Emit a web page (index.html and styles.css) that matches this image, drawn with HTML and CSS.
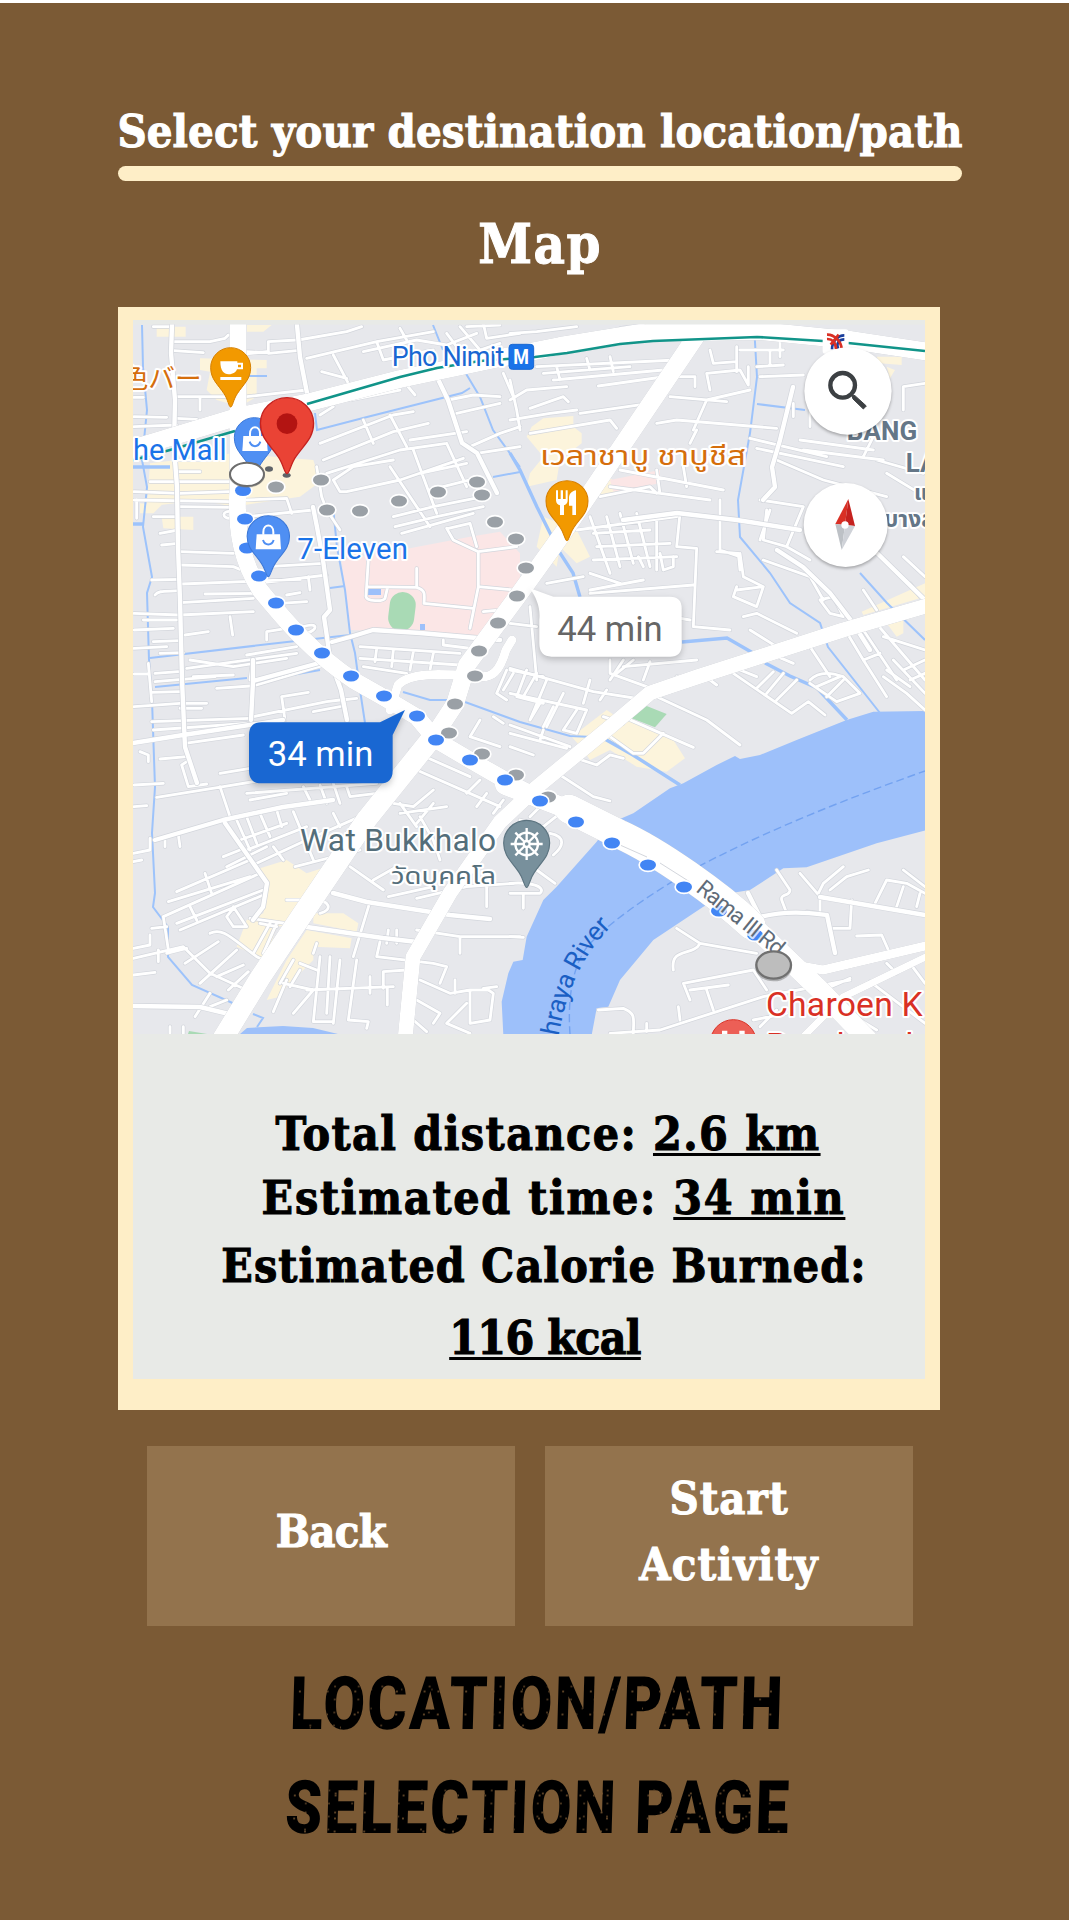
FILE: index.html
```html
<!DOCTYPE html>
<html lang="en">
<head>
<meta charset="utf-8">
<title>Location/Path Selection</title>
<link rel="stylesheet" href="styles.css">
</head>
<body>
<main class="screen">
  <header class="header">
    <h1 class="title"><span class="fit">Select your destination location/path</span></h1>
    <div class="rule"></div>
    <h2 class="subtitle"><span class="fit">Map</span></h2>
  </header>

  <section class="card">
    <div class="panel">
      <svg class="map" viewBox="133 320 792 714" width="792" height="714" role="img" aria-label="Route map">
        <defs>
          <clipPath id="frame"><rect x="133" y="324.5" width="792" height="709.5"/></clipPath>
          <path id="pin" d="M0 118C-6 118-8 95-20 78-38 50-60 35-60 0A60 60 0 1 1 60 0C60 35 38 50 20 78 8 95 6 118 0 118z"/>
          <g id="bag"><path d="M-35 -5H35L38 40H-38z" fill="#fff"/><path d="M-15 -4V-12C-15 -38 15 -38 15 -12V-4" fill="none" stroke="#fff" stroke-width="6"/><path d="M-16 12C-10 30 10 30 16 12" fill="none" stroke="#4f8ff3" stroke-width="6"/></g>
          <g id="minor">
            <g transform="translate(100 300) scale(.33333)">
              <path d="M160 80H215M222 125H330L375 115L385 105M222 152L310 158M375 168L500 155M505 125V160L590 152M505 125L590 120M440 155L500 158M595 120L740 95 785 80M620 175L830 125 1000 95M700 165L745 250M665 215L740 235M790 155L950 120 1040 135 1130 100M830 125L850 180 1000 150M1080 80L1140 150 1200 130M1210 220L1240 290M1040 100L1070 140M1150 70L1160 115 1260 100M1100 80L1200 75M920 120L900 85M230 290H395M300 290V330M102 292H130M440 290L620 270M230 355L290 358M102 380L230 375M102 350L200 352"/>
              <path d="M660 345L700 320M660 430L880 345 940 335M670 480L880 395 985 370M680 520L900 450 1040 430M870 345L920 440M790 360L820 430M740 575L900 540 1090 475M700 540L760 500 880 480M700 540L720 575 740 575M940 450L1010 640M1040 430L1100 560M870 500L990 680M880 650L1000 620 1150 590M885 680L1010 650 1150 620M905 700L1120 640M1045 300L1120 285 1200 290M1070 340L1200 310M1110 440L1200 400 1260 380M1130 460L1260 440M920 255L945 285M750 300L900 270M930 420L1100 395M960 520L1100 490M990 570L1110 540"/>
              <path d="M230 480H330M235 515H300M150 545H390M102 600L390 605M102 575L240 580 390 575M235 620L390 622M110 600V655M390 655C365 655 365 630 395 635M440 600L560 595 575 640M440 650L640 630M160 650H230M180 700L235 690M185 735L235 730M240 755L400 760M242 795L400 800 420 808M155 840L240 838M165 885C175 870 200 875 240 872M245 852L600 838M242 908L460 895M315 882L500 880M560 885L600 878M500 800L670 790M470 850L680 825M625 830L630 870M540 910L620 905M102 940L240 945 460 935M102 990L220 985M130 960H230M390 950L398 1005M255 1005L325 995M500 1020V995L560 985M160 1025L240 1022M102 1045L200 1040M180 1060L250 1058M270 1080L400 1100 560 1075M260 1105L590 1060M440 1065L590 1040M455 1100L450 1140M280 1130L400 1125M610 980C655 965 655 990 620 1000"/>
              <path d="M805 780L798 890C800 905 850 905 855 895L862 865M800 860L950 862C975 870 975 880 972 910L1120 925M950 805V862M1040 685L1060 720 1135 755 1135 860 1110 985M1135 755L1250 740M1135 860L1240 870M1045 685L1110 670 1130 740M1150 935L1200 930M1030 1020V1035L1150 1050M780 1040L1080 1060M780 1075L1080 1095M790 1100L920 1120M830 1045L825 1085M880 1050L875 1100M940 1055L930 1110M1000 1060L990 1110M640 620L650 680 670 780 690 930 670 950 680 1010 690 1080M650 500L665 590 680 630 720 690M695 1025L750 1010 820 990 960 1000 1200 1020"/>
            </g>
            <g transform="translate(510 300) scale(.33333)">
              <path d="M0 100L80 95 200 80M320 110L330 85 400 75M80 200L500 180M100 220L360 200M130 240L460 210M140 200L150 240M230 175L240 210M300 170L310 215M0 300L50 270 170 260M265 258L500 225M60 325L160 290 175 305M30 390L20 330 0 240M0 360L120 340 200 330M60 400L300 360 320 385M210 340L420 310M480 290L650 305M440 370L500 360 800 385M550 390L590 300 720 270M540 430L560 390M600 150L610 190 680 185 680 140M680 140V215M600 270L590 220 690 210 715 255V200M510 230H555V260M690 150H820M740 200L820 195M750 230L880 225M780 150V195M810 120V170M720 415L950 470M870 420L1090 450M880 450L1120 480M800 480L940 540 1130 590M740 445L1000 500M1060 470L1090 410M1130 520L1245 590M1100 480L1240 520M1180 330V260L1245 250M850 310V350M900 330V380"/>
              <path d="M330 510L640 570M300 560L600 600M440 510L450 580M520 500L530 560M590 470L700 490M270 590L420 560 440 580M250 700L420 690M260 740L480 730M250 780L500 770M560 745L500 740 510 640M200 690L500 650M290 650L330 800M330 640L370 790M380 640L420 800M440 650V810M240 650L300 820M400 800L385 770M560 745L550 980 660 990M620 755L685 760 690 810M240 820L330 850M240 870L400 840M110 850L220 830M250 910L540 960M240 880L550 855M630 600V750L690 770M450 760L460 810 490 800V770M750 600L880 620 830 740 760 720 770 630M780 630L750 720M760 780L900 830 940 900M830 740L900 780M1180 770L1245 830M680 870L760 860 740 920 670 890 680 860M690 760L700 830 760 860M700 950L740 940 860 1000M720 990L800 1040M930 900L970 890 1000 950 960 940zM1090 960L1245 1140M1060 990L1160 1140M1000 980L1060 1080 1110 1060M900 1040L960 1130M60 920L80 1140M300 1140L340 1080M340 1100L560 1080M400 1140L420 1085M0 970L80 980M0 1110L100 1130M780 1060L850 1090M1120 1010L1245 1050M1060 870L1100 930M1200 850L1245 910"/>
            </g>
            <g transform="translate(100 660) scale(.33333)">
              <path d="M102 42H145M145 10L155 125M165 40L235 35M165 65L345 50M155 97L240 95M102 140L240 130 320 130M240 145H305M155 185L450 175M160 210L440 190M255 250L430 225M180 297L260 290M120 275L145 285V305M102 375L190 370M170 412L370 380 610 340M360 340L450 325M102 440L140 437M245 315L265 380 320 372M245 315L260 305M350 85L450 78M470 75L690 10M545 110L625 97M545 110L555 180M460 170L680 125 720 120M640 155L720 140M720 60L725 120 770 115M725 120L740 185M360 380L390 470 375 490M195 540V560M235 525L240 560M150 535V570L100 580M100 605L125 600M410 480L450 570M440 470L470 550M480 460L510 530M530 450L545 500M580 455L640 600M420 540L560 490M440 570L620 500M380 620L500 560M470 610L620 540 780 470M585 620L780 570M370 590L420 570M700 460L720 500M520 560L550 600"/>
              <path d="M230 695L450 600M205 725L450 650M190 770L480 640M230 790L490 690M240 810L490 705M315 640L335 700M270 740L290 780M190 770L205 870M155 805L200 800M100 865L150 855V825M175 870V905M100 945L165 937M200 880L260 865M255 910L355 845M300 970L410 870M350 950L430 915M385 990L445 935M400 745L380 770 400 800 440 800 400 740M330 820C370 800 400 840 470 890L510 910M450 775L590 795M510 790L460 880M490 880L530 790M480 790L530 800M285 1070L330 1000M330 1040L380 1020M210 1100V1120M250 1100V1120M100 895L250 860 330 940 440 990"/>
              <path d="M810 725L760 890M650 850L640 880M1160 680V740M950 715L1100 680 1240 670M1080 830V880M950 810L1080 830 1260 830M840 845L830 890 1000 910 1040 920 1020 970M865 810L860 850M890 810V850M620 990L880 980M660 890L640 1085H695M690 890L680 1060M720 900L700 1090M770 900L745 1080 805 1085 800 1105M810 950V1000M850 985V935L920 930M862 985V1035M600 910L650 930M550 970L640 990 580 1060M520 1055L560 960M540 970L580 900M600 930L570 980M560 720H640C690 720 700 750 660 760M750 620L850 690M820 660L890 620M865 710L1000 680M960 960L1050 1000 1110 990V1090L1170 1080 1180 1000 1165 990 1110 990M950 1020L1020 1060 1000 1090M1190 980L1150 985M940 1080L980 1115M1110 1120L1040 1090 1100 1030M1065 960V1000M900 350L950 330 1200 440M930 270L1110 350M880 430L940 440 1000 390M900 460L1040 440M950 490L1000 430M960 470L1000 540 1020 600M900 430L950 500M1140 360L1100 400M1220 30L1190 100 1220 120M1140 180L1110 230 1200 260M1180 170L1210 190M660 375L680 430M700 370L720 430M610 380L630 420M440 400L830 370M450 420L560 400M740 380L750 410 830 400M1180 460L1210 420M1130 440L1160 400"/>
            </g>
            <g transform="translate(510 660) scale(.33333)">
              <path d="M0 25L250 95 410 120M10 40L-20 90M50 30L20 110 100 130M80 40L40 110M110 60L60 180M160 100L110 200M0 100L230 150 200 220 160 210M90 130L60 180M130 140L100 200M200 150L160 210M240 60L220 130M270 120L290 90M0 195L180 260M0 220L170 265M100 210L90 240M0 260L70 285M300 0V40L410 80M320 40L370 0M440 110L590 180 690 255M350 175L550 262M300 230L370 280 400 280 460 220M280 170L340 190M200 295L260 315 300 285 340 295M150 345L250 410 300 423M600 60L620 75M500 50L560 60M670 40L845 160 895 125 945 165M690 30L740 50M770 100L820 40M800 120L860 60M740 85L790 35M900 60C930 30 970 40 1000 50L1050 100 980 125 900 70M950 110L1000 60M920 80L990 50M1120 50L1190 100 1245 150M1130 30L1200 80M1060 0L1130 110M1150 0L1245 100M1180 30L1245 0M1200 60L1245 40M30 480L100 500 150 460M60 470L90 440M120 520C170 530 160 560 130 585M80 630L135 670M0 670C60 665 110 680 90 700H0M40 700V745M0 830L40 832"/>
              <path d="M800 630L840 690C840 710 810 700 815 720L830 760M870 640L930 710V760L890 755M925 700L940 670 1000 620M960 690L1010 650 1075 630M1025 720L1020 805H970M1095 730L1130 660 1190 670 1245 700M1160 740L1180 680M1230 700L1220 740M1180 630L1245 680M1040 828L1115 825 1135 870M500 805L570 850 740 880M570 850C550 890 480 860 490 930M730 930L770 990M730 930L520 970 540 1020M540 990L655 975M590 990L610 1050M510 1080L505 1040M265 1050L340 1045C380 1060 370 1080 370 1120M410 1090V1115M1130 910L1160 940M1200 910L1245 970M1080 965L1245 1090M730 1080L830 1060M750 1100L800 1050M920 960L940 990 1020 955M1050 1080L1100 1110M300 1120L450 1110 760 1010 1020 960"/>
            </g>
          </g>
          <g id="mid">
            <path d="M172 325L171 353 175 400 174 447 177 487 178 547 180 600 182 680 185 747 197 783M297 325L300 357 307 393M437 377L448 400 462 443 477 453 497 493M313 507L317 527 323 560 330 610 324 617 327 637 330 660 341 690 347 720M332 642L350 637 373 630 420 633 500 640M793 387L780 440 772 467 775 487 763 500M623 520L677 513 737 520 800 530M777 550L803 567 830 593 853 623 870 650M877 553L925 600M253 660V682L251 720M133 743L183 735 283 720M155 840L223 820 283 807 333 800M225 823L267 883 263 907 253 920M333 893L367 902 450 915 490 919M307 927L383 938 417 942M253 681L330 660M133 1006L200 1007 233 1015M748 893L760 917C787 910 810 913 827 915L835 953M820 897L925 915"/>
          </g>
          <g id="major">
            <path stroke-width="17" d="M238 320V487C235 533 243 563 260 590 287 623 313 653 353 680L383 697 417 717 436 740 470 760 505 780 540 800"/>
            <path stroke-width="29" d="M569 809L589 819 619 834C659 852 719 895 751 925"/>
            <path stroke-width="20" d="M505 785L575 812M745 918L775 947 820 990 868 1040"/>
            <path stroke-width="18" d="M128 450L240 416 310 402 400 379 500 358 560 346 640 333 760 331 850 340 930 352M707 320L563 533 517 597 467 665 455 704 430 742"/>
            <path stroke-width="21" d="M432 738L367 819 300 918 260 978 222 1040"/>
            <path stroke-width="15" d="M930 605L843 630 697 677 650 693 610 727 537 787 500 822 450 893 413 957 405 1040"/>
            <path stroke-width="9" d="M930 945L823 970 795 965M390 710L398 685C410 672 440 674 475 676 493 680 500 670 506 650L512 640"/>
            <path stroke-width="7" d="M930 955L843 997 800 1040"/>
          </g>
        </defs>

        <g clip-path="url(#frame)">
          <rect class="land" x="133" y="320" width="792" height="714"/>

          <g class="built">
            <path transform="translate(100 300) scale(.33333)" d="M170 80H257V110H170zM440 75H515L490 95H440zM300 175L500 180V205H470V290L420 320 350 300 320 270 330 215 300 210zM150 490L400 460 640 480 660 545 600 590 400 620 300 600 140 620zM185 650H280V690L190 685zM120 610L185 615 160 640 120 640z"/>
            <path transform="translate(510 300) scale(.33333)" d="M410 75H560L540 92 420 90zM65 380L100 355 190 348V380L215 400V430L150 480 140 540 50 560 60 520 100 470 50 410zM250 590L300 530 330 580zM100 650L200 690 240 770 200 790 150 740 140 800 80 740zM1055 935L1245 850V890L1060 945zM1130 970L1180 960V1000L1160 1010zM1100 170H1175V195L1110 190zM1130 200L1155 210 1140 235z"/>
            <path transform="translate(100 660) scale(.33333)" d="M480 625L560 600 620 640 680 620 700 640 590 790 530 800 510 860 440 985 500 900 410 860 440 780 490 760 500 680zM640 760L730 760 775 790 770 815 640 790zM620 810L755 835 750 865 640 860V900L560 980 540 1010 500 1020 560 900z"/>
            <path transform="translate(510 660) scale(.33333)" d="M185 230L290 150 320 170 460 215 490 240 525 295 470 335 380 320 300 270 240 300 220 270z"/>
          </g>
          <g class="campus">
            <path transform="translate(100 300) scale(.33333)" d="M725 780L930 745 1110 710 1200 695 1260 760V860L1180 1010 750 990 735 870z"/>
            <path transform="translate(510 300) scale(.33333)" d="M300 540L450 510V550L310 575z"/>
          </g>
          <g class="park">
            <rect x="389" y="592" width="26" height="39" rx="13" transform="rotate(7 402 611)"/>
            <path transform="translate(510 660) scale(.33333)" d="M410 138L470 162 435 202 365 175z"/>
            <path d="M189 1031L207 1034H188z"/>
          </g>
          <g class="water">
            <path transform="translate(510 660) scale(.33333)" d="M1250 153L1090 155 1010 180 860 240 750 285 690 297 675 288 620 315 520 370 480 385 370 460 300 490 260 545 140 680 100 720 50 830 38 900 10 905 -5 940 -25 1025 -20 1125H245L260 1045 295 1040 330 960 430 840 580 740 660 700 720 690 820 625 890 622 1100 550 1250 510z"/>
            <path d="M240 1034L247 1028 283 1026 313 1028 338 1034zM368 589H381V595H368zM420 624H425V630H420z"/>
          </g>
          <g class="stream">
            <path d="M142 325L143 367 147 410 142 460 147 487 143 527 152 577 147 593 149 660 152 700 155 787 152 833 155 893 153 907 168 927V957L192 985 237 1005M253 1014L263 1018 257 1027M248 376H267M315 413L317 430 367 417 462 393 470 388M433 325L443 350M465 372L480 397 493 430 520 467M493 477L520 472M333 507L337 547 345 590 350 633 355 653 360 690 365 723M330 588L345 586M150 658L287 642 350 635M155 687L247 678M253 682L320 670M403 692L430 700 450 700M465 702L520 722 570 736 593 737M754 325L757 377 750 433 738 500 740 537 770 573 790 603 820 623 828 647 880 713M757 404L805 410M860 573L887 603 925 640"/>
            <path class="wide" d="M510 453L520 470 537 507 560 553 573 573 580 597M682 642L727 638 753 653M765 663L790 676 817 688 847 720M603 738L633 755 680 785M133 467H170M133 524H144"/>
          </g>
          <path class="ferry" d="M570 1034C568 1007 570 970 587 947 610 920 670 880 717 857 777 827 843 800 925 771"/>

          <use href="#minor" class="road minor-edge"/>
          <use href="#minor" class="road minor-fill"/>
          <use href="#mid" class="road mid-edge"/>
          <use href="#mid" class="road mid-fill"/>
          <use href="#major" class="road major-fill"/>
          <path class="lane" d="M620 845L647 857M660 863L690 882"/>
          <path class="rail" d="M133 460L170 450 235 431M307 404L400 377 437 368 480 361 535 357 567 353 620 344 653 341 757 337 823 341M848 343L925 351"/>

          <g class="dots-alt">
            <ellipse cx="276" cy="487" rx="8" ry="5.5"/><ellipse cx="321" cy="480" rx="8" ry="5.5"/><ellipse cx="327" cy="510" rx="8" ry="5.5"/><ellipse cx="360" cy="511" rx="8" ry="5.5"/><ellipse cx="399" cy="501" rx="8" ry="5.5"/><ellipse cx="438" cy="492" rx="8" ry="5.5"/><ellipse cx="477" cy="482" rx="8" ry="5.5"/><ellipse cx="482" cy="495" rx="8" ry="5.5"/><ellipse cx="495" cy="522" rx="8" ry="5.5"/><ellipse cx="516" cy="539" rx="8" ry="5.5"/><ellipse cx="526" cy="568" rx="8" ry="5.5"/><ellipse cx="517" cy="596" rx="8" ry="5.5"/><ellipse cx="498" cy="623" rx="8" ry="5.5"/><ellipse cx="479" cy="651" rx="8" ry="5.5"/><ellipse cx="475" cy="676" rx="8" ry="5.5"/><ellipse cx="455" cy="704" rx="8" ry="5.5"/><ellipse cx="449" cy="733" rx="8" ry="5.5"/><ellipse cx="482" cy="754" rx="8" ry="5.5"/><ellipse cx="516" cy="775" rx="8" ry="5.5"/><ellipse cx="548" cy="797" rx="8" ry="5.5"/>
          </g>
          <g class="dots-main">
            <ellipse cx="243" cy="490.500" rx="8" ry="5.500"/><ellipse cx="245" cy="519" rx="8" ry="5.500"/><ellipse cx="247" cy="548" rx="8" ry="5.500"/><ellipse cx="259" cy="576" rx="8" ry="5.500"/><ellipse cx="276" cy="603" rx="8" ry="5.500"/><ellipse cx="296" cy="630" rx="8" ry="5.500"/><ellipse cx="322" cy="653" rx="8" ry="5.500"/><ellipse cx="351" cy="676" rx="8" ry="5.500"/><ellipse cx="384" cy="696" rx="8" ry="5.500"/><ellipse cx="417" cy="716" rx="8" ry="5.500"/><ellipse cx="436" cy="740" rx="8" ry="5.500"/><ellipse cx="470" cy="760" rx="8" ry="5.500"/><ellipse cx="505" cy="780" rx="8" ry="5.500"/><ellipse cx="540" cy="801" rx="8" ry="5.500"/><ellipse cx="576" cy="822" rx="8" ry="5.500"/><ellipse cx="612" cy="843" rx="8" ry="5.500"/><ellipse cx="648" cy="865" rx="8" ry="5.500"/><ellipse cx="684" cy="887" rx="8" ry="5.500"/><ellipse cx="719" cy="911" rx="8" ry="5.500"/><ellipse cx="755" cy="935" rx="8" ry="5.500"/>
          </g>

          <g transform="translate(100 300) scale(.33333)">
            <text class="lbl food" x="305" y="264" text-anchor="end" font-size="80">色バー</text>
            <text class="lbl transit" x="875" y="199" font-size="81" textLength="338">Pho Nimit</text>
            <text class="lbl shop" x="380" y="479" font-size="87" text-anchor="end">The Mall</text>
            <text class="lbl shop" x="592" y="776" font-size="88" textLength="332">7-Eleven</text>
            <use href="#pin" x="392" y="203" fill="#f29900" stroke="#d67f00" stroke-width="3"/>
            <path d="M361 184H412V188H429V208H411C408 216 400 223 386 223 371 223 361 212 361 184zM414 194V202H423V194zM361 231H424V240H361z" fill="#fff" fill-rule="evenodd"/>
            <use href="#pin" x="463" y="413" fill="#4f8ff3" stroke="#3c78d8" stroke-width="3"/>
            <use href="#bag" x="465" y="413"/>
            <ellipse cx="507" cy="507" rx="12" ry="8" fill="#5f6368"/>
            <ellipse cx="441" cy="526" rx="54" ry="37" fill="#777" opacity=".5"/>
            <ellipse cx="441" cy="523" rx="51" ry="35" fill="#fff" stroke="#6d6d6d" stroke-width="6"/>
            <ellipse cx="560" cy="526" rx="12" ry="7" fill="#5f6368"/>
            <use href="#pin" transform="translate(561 370) scale(1.33 1.28)" fill="#ea4335" stroke="#c5221f" stroke-width="3"/>
            <circle cx="561" cy="371" r="31" fill="#b31412"/>
            <use href="#pin" transform="translate(505 709) scale(1.06 1.03)" fill="#4f8ff3" stroke="#3c78d8" stroke-width="3"/>
            <use href="#bag" x="505" y="708"/>
          </g>

          <g transform="translate(510 300) scale(.33333)">
            <rect x="-3" y="133" width="74" height="75" rx="10" fill="#1a73e8" stroke="#1967d2" stroke-width="3"/>
            <text x="10" y="192" class="sign" font-size="59" textLength="47" lengthAdjust="spacingAndGlyphs">M</text>
            <rect x="938" y="88" width="78" height="74" rx="10" fill="#fff"/>
            <g fill="none" stroke-width="8">
              <path stroke="#1a3e9c" d="M1003 106C985 106 966 122 966 148M1003 118C988 118 977 130 985 147"/>
              <path stroke="#d93025" d="M951 104C971 103 993 122 995 147M951 117C967 116 978 128 978 147M986 104L962 134"/>
            </g>
            <text class="lbl food" x="90" y="494" font-size="80" textLength="618" lengthAdjust="spacingAndGlyphs">เวลาชาบู ชาบูชีส</text>
            <use href="#pin" transform="translate(171 603) scale(1.05 1.01)" fill="#f29900" stroke="#d67f00" stroke-width="3"/>
            <path d="M138 571H144V597H152V571H159V597H167V571H173V600C173 611 167 614 162 616V645H150V616C144 614 138 610 138 600zM198 571V645H187V617H177V594C177 580 188 573 198 571z" fill="#fff"/>
            <text class="lbl area" x="1010" y="419" font-size="78" textLength="212">BANG</text>
            <text class="lbl area" x="1187" y="516" font-size="78">LAEM</text>
            <text class="lbl area" x="1212" y="600" font-size="66">แขวง</text>
            <text class="lbl area" x="1122" y="682" font-size="68">บางลำภู</text>
            <circle class="fab" cx="1014" cy="273" r="131"/>
            <circle cx="998" cy="256" r="37" fill="none" stroke="#3c4043" stroke-width="13"/>
            <path d="M1025 285L1035 287 1069 318 1060 327 1029 297z" fill="#3c4043" stroke="#3c4043" stroke-width="3"/>
            <circle class="fab" cx="1007" cy="675" r="126"/>
            <path d="M1015 597L976 672 1005 675z" fill="#d93025"/><path d="M1015 597L1035 678 1005 675z" fill="#c5221f"/>
            <path d="M976 672L995 750 1005 675z" fill="#bdc1c6"/><path d="M1035 678L995 750 1005 675z" fill="#cfd2d8"/>
            <circle cx="1005" cy="675" r="11" fill="#fff"/>
            <path class="bubble" d="M60 865L130 890H480Q515 890 515 925V1035Q515 1070 480 1070H125Q88 1070 88 1030V960C92 925 80 895 60 865z"/>
            <text class="time" x="142" y="1022" font-size="104" textLength="316" fill="#666">44 min</text>
          </g>

          <g transform="translate(100 660) scale(.33333)">
            <path class="bubble-main" d="M915 150L878 225V332Q878 370 840 370H485Q447 370 447 332V225Q447 187 485 187H840z"/>
            <text class="time" x="503" y="318" font-size="104" textLength="317" fill="#fff">34 min</text>
            <text class="lbl temple" x="600" y="574" font-size="95" textLength="588">Wat Bukkhalo</text>
            <text class="lbl temple" x="873" y="673" font-size="70" textLength="315" lengthAdjust="spacingAndGlyphs">วัดบุคคโล</text>
          </g>

          <g transform="translate(510 660) scale(.33333)">
            <use href="#pin" transform="translate(50 549) scale(1.15 1.13)" fill="#78909c" stroke="#5c7480" stroke-width="3"/>
            <g fill="none" stroke="#fff" stroke-width="7"><circle cx="50" cy="552" r="34"/><circle cx="50" cy="552" r="9"/><path d="M50 504V543M50 561V600M2 552H41M59 552H98M16 518L44 546M56 558L84 586M84 518L56 546M44 558L16 586"/></g>
            <text class="lbl street" font-size="68" textLength="316" transform="translate(555 692) rotate(39)">Rama III Rd</text>
            <path id="bank" d="M140 1160C158 1050 190 900 325 780" fill="none"/>
            <text class="river" font-size="78"><textPath href="#bank" startOffset="32" textLength="372">hraya River</textPath></text>
            <ellipse cx="791" cy="921" rx="55" ry="43" fill="#777" opacity=".5"/>
            <ellipse cx="791" cy="915" rx="52" ry="41" fill="#bdbdbd" stroke="#707070" stroke-width="7"/>
            <text class="lbl clinic" x="768" y="1069" font-size="101" textLength="470">Charoen K</text>
            <text class="lbl clinic" x="768" y="1190" font-size="101" textLength="470">Pracharak</text>
            <circle cx="670" cy="1148" r="69" fill="#ec5f56" stroke="#d93025" stroke-width="3"/>
            <path d="M636 1112H652V1160H636zM688 1112H704V1160H688z" fill="#fff"/>
          </g>
        </g>
      </svg>

      <div class="stats">
        <p class="stat s1"><span class="fit">Total distance: <u>2.6 km</u></span></p>
        <p class="stat s2"><span class="fit">Estimated time: <u>34 min</u></span></p>
        <p class="stat s3"><span class="fit">Estimated Calorie Burned:</span></p>
        <p class="stat s4"><span class="fit"><u>116 kcal</u></span></p>
      </div>
    </div>
  </section>

  <nav class="actions">
    <button class="btn btn-back"><span class="fit">Back</span></button>
    <button class="btn btn-start"><span class="fit">Start<br>Activity</span></button>
  </nav>

  <footer class="caption">
    <span class="cap cap1">LOCATION/PATH</span>
    <span class="cap cap2">SELECTION PAGE</span>
  </footer>
</main>
</body>
</html>
```
FILE: styles.css
```css
* { box-sizing: border-box; }
body { margin: 0; background: #fff; font-family: "DejaVu Serif", serif; }
h1, h2, p { margin: 0; }

.screen {
  width: 1069px;
  height: 1917px;
  margin-top: 3px;
  padding: 94px 0 0 118px;
  background: #7b5a35;
  display: flex;
  flex-direction: column;
}
.fit {
  display: inline-block;
  white-space: nowrap;
  font-family: "DejaVu Serif Condensed", "DejaVu Serif", serif;
  font-stretch: condensed;
  font-weight: 700;
  -webkit-text-stroke: 1px currentColor;
}

.header { width: 844px; color: #fff; }
.title, .subtitle { display: flex; justify-content: center; }
.title { height: 69px; font-size: 45px; line-height: 69px; letter-spacing: .1px; }
.rule { height: 15px; border-radius: 8px; background: #feeec7; }
.subtitle { height: 126px; font-size: 54px; line-height: 126px; letter-spacing: 1.5px; }

.card { width: 822px; height: 1103px; padding: 13px 15px 31px; background: #feeec7; }
.panel { height: 1059px; background: #e8eae7; }
.map { display: block; font-family: Roboto, "Noto Sans CJK JP", "Noto Sans Thai", sans-serif; }

.land { fill: #e7e8ec; }
.built { fill: #fcf4dc; }
.campus { fill: #fbe6e6; }
.park { fill: #a9dab5; }
.water { fill: #9dc0fa; }
.stream { fill: none; stroke: #9dc3fb; stroke-width: 2; }
.stream .wide { stroke-width: 3.4; }
.ferry { fill: none; stroke: #73a2f0; stroke-width: 1.4; stroke-dasharray: 8 4; }
.road { fill: none; stroke-linecap: round; stroke-linejoin: round; }
.minor-edge { stroke: #d3d6dc; stroke-width: 12.5px; }
.minor-fill { stroke: #fff; stroke-width: 8.5px; }
.mid-edge { stroke: #d3d6dc; stroke-width: 5.8px; }
.mid-fill { stroke: #fff; stroke-width: 4.4px; }
.major-fill { stroke: #fff; filter: drop-shadow(0 0 .7px #b4b8c0); }
.lane { stroke: #d3d6dc; fill: none; }
.rail { fill: none; stroke: #119489; stroke-width: 2.6; }
.dots-alt { fill: #9aa0a6; stroke: #fff; stroke-width: 3.4; paint-order: stroke; }
.dots-main { fill: #4285f4; stroke: #fff; stroke-width: 3.4; paint-order: stroke; }

.lbl { stroke: #fff; stroke-width: 12px; stroke-linejoin: round; paint-order: stroke; }
.food { fill: #d56e0c; }
.transit { fill: #1967d2; }
.shop { fill: #1a73e8; }
.temple { fill: #546e7a; }
.area { fill: #647687; font-weight: 700; }
.street { fill: #5f6b78; stroke: rgba(255, 255, 255, .75); }
.clinic { fill: #d93025; }
.river { fill: #1a5fc4; }
.sign { fill: #fff; font-weight: 700; }
.fab { fill: #fff; filter: drop-shadow(0 5px 5px rgba(0, 0, 0, .3)); }
.bubble { fill: #fff; filter: drop-shadow(0 8px 10px rgba(0, 0, 0, .2)); }
.bubble-main { fill: #1967d2; filter: drop-shadow(0 10px 10px rgba(0, 0, 0, .2)); }

.stats { padding-top: 68px; color: #000; }
.stat { display: flex; justify-content: center; font-size: 46px; line-height: 64px; height: 64px; }
.stat u { text-decoration-thickness: 3px; text-underline-offset: 3px; text-decoration-skip-ink: none; }
.s1 { padding-left: 38px; letter-spacing: 1.45px; }
.s2 { padding-left: 49px; letter-spacing: 1.75px; }
.s3 { padding-left: 30px; height: 72px; line-height: 72px; letter-spacing: 1.1px; }
.s4 { padding-left: 32px; height: 72px; line-height: 72px; letter-spacing: -.7px; }

.actions { display: flex; gap: 30px; margin: 36px 0 0 29px; }
.btn {
  width: 368px; height: 180px; padding: 0; border: 0;
  background: #93734d; color: #fff;
  font-size: 45px; line-height: 66px;
}
.btn-back { padding-bottom: 9px; letter-spacing: -.7px; }
.btn-start { padding-bottom: 8px; letter-spacing: 1px; }

.caption { display: flex; flex-direction: column; align-items: center; width: 840px; margin-top: 26px; }
.cap {
  font: 900 74px/104px Roboto, sans-serif;
  white-space: nowrap;
  letter-spacing: 3px;
  color: transparent;
  -webkit-background-clip: text;
  background-clip: text;
  background-color: #000;
  background-image:
    radial-gradient(circle, #6b4d2c 0 .7px, transparent 1.2px),
    radial-gradient(circle, #6b4d2c 0 .6px, transparent 1.1px),
    radial-gradient(circle, #5a4126 0 .8px, transparent 1.2px);
  background-size: 17px 23px, 29px 13px, 37px 19px;
  background-position: 3px 5px, 11px 2px, 7px 9px;
}
.cap1 { transform: scaleX(.815) skewX(-2deg); }
.cap2 { transform: scaleX(.8) skewX(-2deg); }
```
